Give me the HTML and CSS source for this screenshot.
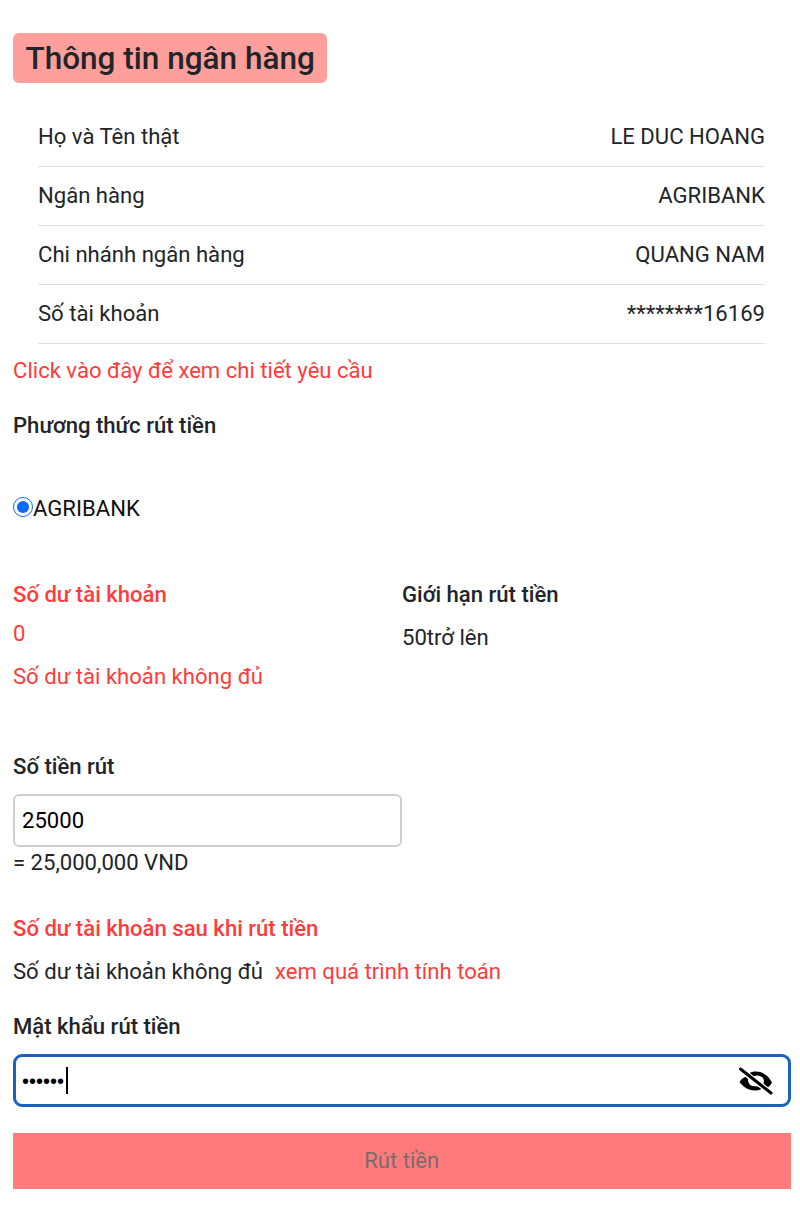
FILE: index.html
```html
<!DOCTYPE html>
<html lang="vi">
<head>
<meta charset="utf-8">
<title>Thông tin ngân hàng</title>
<link rel="stylesheet" href="styles.css">
</head>
<body>
<main class="page">
  <h1 class="title">Thông tin ngân hàng</h1>
  <ul class="info">
    <li class="info-row"><span>Họ và Tên thật</span><span>LE DUC HOANG</span></li>
    <li class="info-row"><span>Ngân hàng</span><span>AGRIBANK</span></li>
    <li class="info-row"><span>Chi nhánh ngân hàng</span><span>QUANG NAM</span></li>
    <li class="info-row"><span>Số tài khoản</span><span>********16169</span></li>
  </ul>
  <a class="link detail-link">Click vào đây để xem chi tiết yêu cầu</a>
  <div class="label method-label">Phương thức rút tiền</div>
  <label class="radio-line"><input class="radio" type="radio" checked name="method"><span>AGRIBANK</span></label>
  <div class="balance-grid">
    <div class="col">
      <div class="label red">Số dư tài khoản</div>
      <div class="red balance-val">0</div>
      <div class="red balance-note">Số dư tài khoản không đủ</div>
    </div>
    <div class="col">
      <div class="label">Giới hạn rút tiền</div>
      <div class="limit-val">50trở lên</div>
    </div>
  </div>
  <div class="label amount-label">Số tiền rút</div>
  <div class="amount-box">25000</div>
  <div class="converted">= 25,000,000 VND</div>
  <div class="label red after-label">Số dư tài khoản sau khi rút tiền</div>
  <div class="after-line"><span>Số dư tài khoản không đủ</span><a class="link">xem quá trình tính toán</a></div>
  <div class="label pass-label">Mật khẩu rút tiền</div>
  <div class="pass-box">
    <span class="dots">••••••</span><span class="caret"></span>
    <svg class="eye" viewBox="0 0 36 30" width="36" height="30" aria-hidden="true">
      <path d="M12 7.500C14 6 16 5.500 19 5.500C26 5.500 32 10 35 16.500C34 18.500 32.500 20 31 21.500L26.500 17.500C27.500 14 26.500 11.500 24 10.500C21.500 9 18.500 9 16.500 10.500Z" fill="#000"/>
      <path d="M2.500 16C4 13.500 6 12 8.500 10.800L11 13C10.800 15.500 12 18.500 15 20L21 20.500L24.500 23C22 24 20 24.500 18 24.500C11 24.500 6 20.500 2.500 16Z" fill="#000"/>
      <path d="M3.500 3L34 27" fill="none" stroke="#fff" stroke-width="5"/>
      <path d="M3.500 3L34 27" fill="none" stroke="#000" stroke-width="3" stroke-linecap="round"/>
    </svg>
  </div>
  <button class="submit" type="button" disabled>Rút tiền</button>
</main>
</body>
</html>
```
FILE: styles.css
```css
* { box-sizing: border-box; }
html, body { margin: 0; background: #fff; }
body {
  font-family: Roboto, "Noto Sans", "Liberation Sans", sans-serif;
  font-size: 22.1px;
  line-height: 30px;
  color: #212529;
}
.page { padding: 33px 9.500px 18px 13px; display: flex; flex-direction: column; align-items: stretch; }
.title {
  align-self: flex-start;
  margin: 0;
  height: 50px;
  width: 314px;
  padding: 0 12.500px;
  background: #ff9f9c;
  border-radius: 6px;
  font-size: 31.5px;
  font-weight: 500;
  line-height: 52px;
  white-space: nowrap;
}
.info { list-style: none; margin: 24px 0 0; padding: 0 25.500px 0 25px; }
.info-row {
  display: flex;
  justify-content: space-between;
  align-items: center;
  height: 59px;
  padding-bottom: 2px;
  border-bottom: 1.500px solid #dee2e6;
}
.info-row:first-child { height: 60px; }
.red, .link { color: #ff3b3b; }
.detail-link { display: block; margin-top: 11px; }
.label { font-weight: 500; }
.method-label { margin-top: 25px; }
.radio-line { display: flex; align-items: center; margin-top: 53px; height: 30px; color: #111; }
.radio { width: 20px; height: 20px; margin: 0 0 2px 0; accent-color: #0b6cf0; }
.balance-grid { display: grid; grid-template-columns: 389px 1fr; margin-top: 56px; }
.balance-val { margin-top: 9px; }
.balance-note { margin-top: 13px; }
.limit-val { margin-top: 13px; }
.amount-label { margin-top: 60px; }
.amount-box {
  width: 389px;
  height: 53px;
  margin-top: 13px;
  padding: 0 7px;
  border: 2px solid #cfcfcf;
  border-radius: 6px;
  line-height: 48px;
  color: #000;
}
.converted { margin-top: 0; }
.after-label { margin-top: 36px; }
.after-line { display: flex; gap: 12px; margin-top: 13px; }
.pass-label { margin-top: 25px; }
.pass-box {
  display: flex;
  align-items: center;
  height: 53px;
  margin-top: 13px;
  padding: 0 15px 0 6px;
  border: 3px solid #1a62bd;
  border-radius: 9px;
  color: #000;
}
.dots { font-family: "Liberation Sans", sans-serif; font-size: 20px; letter-spacing: 0; }
.caret { width: 2px; height: 27px; margin-left: 2px; background: #000; }
.eye { margin-left: auto; }
.submit {
  height: 56px;
  margin-top: 26px;
  padding: 0 0 2px;
  border: 0;
  background: #ff7b7b;
  color: #7a6b6b;
  font: inherit;
}
```
